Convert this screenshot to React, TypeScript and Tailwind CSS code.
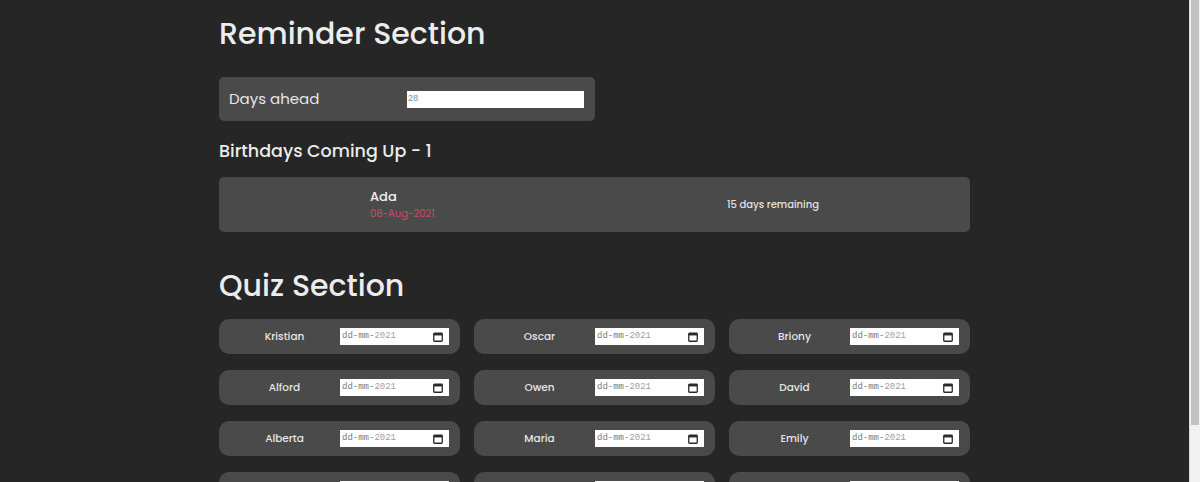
import React from "react";

const names = [
  "Kristian", "Oscar", "Briony",
  "Alford", "Owen", "David",
  "Alberta", "Maria", "Emily",
  "Thomas", "Grace", "Henry",
];

function CalIcon() {
  return (
    <svg width="10" height="10" viewBox="0 0 10 10" className="shrink-0">
      <rect x="0.75" y="1.25" width="8.5" height="8" rx="0.8" fill="none" stroke="#2a2a2a" strokeWidth="1.3" />
      <rect x="0.75" y="1.25" width="8.5" height="2.2" fill="#2a2a2a" />
    </svg>
  );
}

function DateBox() {
  return (
    <div className="flex h-[17px] w-[109px] items-center justify-between bg-white pl-[2px] pr-[6px] font-['Liberation_Mono',monospace] text-[9px] leading-none">
      <span>
        <span className="text-[#7a7a7a]">dd-mm-</span>
        <span className="text-[#a0a0a0]">2021</span>
      </span>
      <CalIcon />
    </div>
  );
}

function QuizCard({ name }: { name: string }) {
  return (
    <div className="flex h-[35px] items-center rounded-[10px] bg-[#4a4a4a] pl-[10px]">
      <div className="w-[111px] text-center text-[10.5px] font-medium text-[#e6e6e6]">{name}</div>
      <DateBox />
    </div>
  );
}

export default function App() {
  return (
    <div className="flex h-[482px] w-[1200px] overflow-hidden bg-[#262626] font-['Poppins','Open_Sans',sans-serif]">
      <div className="flex-1">
        <div className="mx-auto w-[751px]">
          <h1 className="mt-[14px] h-[40px] text-[30px] font-medium leading-[40px] text-[#ececec]">Reminder Section</h1>
          <div className="mt-[23px] flex h-[44px] w-[376px] items-center rounded-[5px] bg-[#4a4a4a] pl-[10px]">
            <span className="w-[178px] text-[15px] text-[#e6e6e6]">Days ahead</span>
            <div className="flex h-[17px] w-[177px] items-center bg-white pl-[1px] font-['Liberation_Sans',sans-serif] text-[9px] text-[#8a8a8a]">28</div>
          </div>
          <h2 className="mt-[17px] h-[26px] text-[17.5px] font-medium leading-[26px] text-[#ececec]">Birthdays Coming Up - 1</h2>
          <div className="mt-[13px] flex h-[55px] items-center rounded-[5px] bg-[#4a4a4a]">
            <div className="w-[151px]" />
            <div className="flex w-[353px] flex-col">
              <span className="text-[13px] font-medium leading-[18px] text-[#f0f0f0]">Ada</span>
              <span className="text-[10px] leading-[16px] text-[#c94a66]">08-Aug-2021</span>
            </div>
            <span className="w-[100px] whitespace-nowrap text-center text-[10px] font-medium text-[#e0e0e0]">15 days remaining</span>
          </div>
          <h1 className="mt-[34px] h-[40px] text-[30px] font-medium leading-[40px] text-[#ececec]">Quiz Section</h1>
          <div className="mt-[13px] grid grid-cols-3 gap-x-[14px] gap-y-[16px]">
            {names.map((n) => (
              <QuizCard key={n} name={n} />
            ))}
          </div>
        </div>
      </div>
      <div className="flex h-full w-[11px] flex-col border-l border-[#dcdcdc] bg-[#f1f1f1] px-[1px]">
        <div className="h-[425px] w-full bg-[#c1c1c1]" />
      </div>
    </div>
  );
}
